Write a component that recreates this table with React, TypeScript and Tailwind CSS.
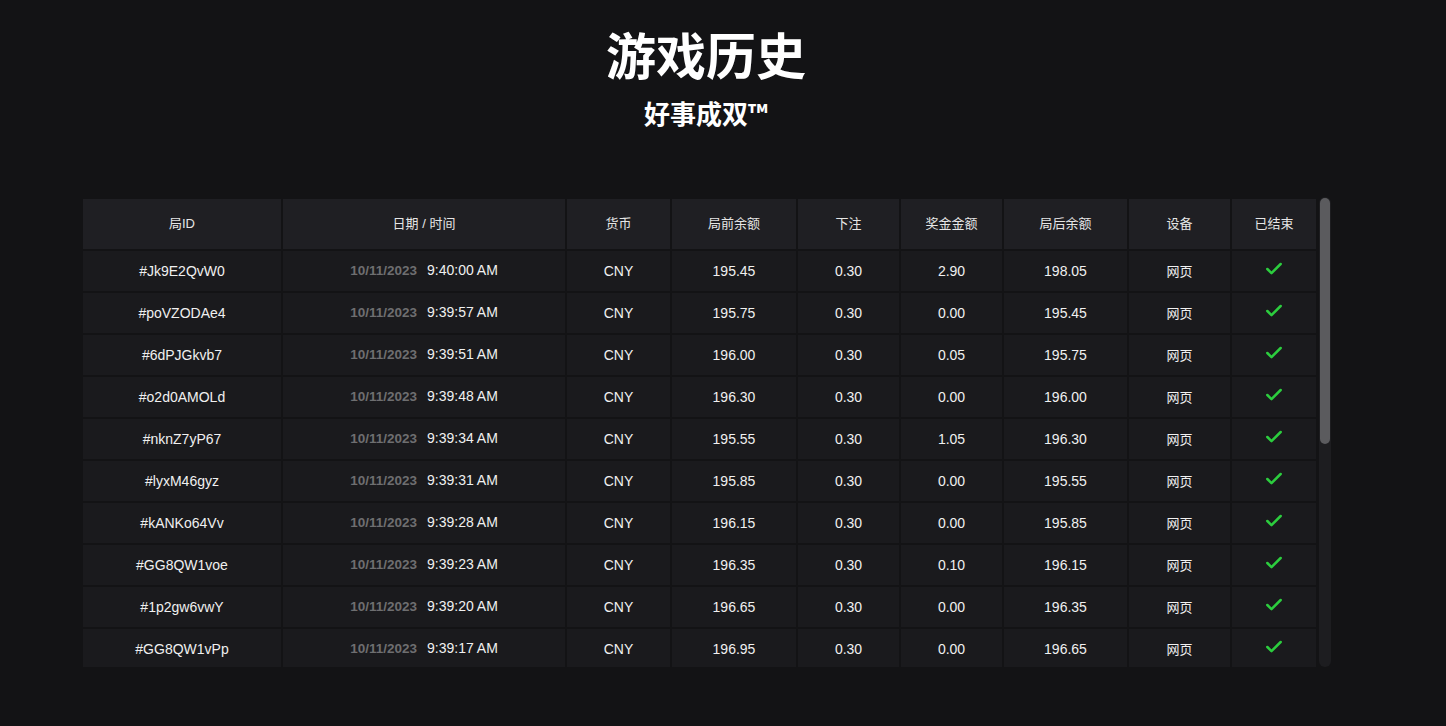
import { Check } from "lucide-react";

type Round = {
  id: string;
  time: string;
  before: string;
  win: string;
  after: string;
};

const rounds: Round[] = [
  { id: "#Jk9E2QvW0", time: "9:40:00 AM", before: "195.45", win: "2.90", after: "198.05" },
  { id: "#poVZODAe4", time: "9:39:57 AM", before: "195.75", win: "0.00", after: "195.45" },
  { id: "#6dPJGkvb7", time: "9:39:51 AM", before: "196.00", win: "0.05", after: "195.75" },
  { id: "#o2d0AMOLd", time: "9:39:48 AM", before: "196.30", win: "0.00", after: "196.00" },
  { id: "#nknZ7yP67", time: "9:39:34 AM", before: "195.55", win: "1.05", after: "196.30" },
  { id: "#lyxM46gyz", time: "9:39:31 AM", before: "195.85", win: "0.00", after: "195.55" },
  { id: "#kANKo64Vv", time: "9:39:28 AM", before: "196.15", win: "0.00", after: "195.85" },
  { id: "#GG8QW1voe", time: "9:39:23 AM", before: "196.35", win: "0.10", after: "196.15" },
  { id: "#1p2gw6vwY", time: "9:39:20 AM", before: "196.65", win: "0.00", after: "196.35" },
  { id: "#GG8QW1vPp", time: "9:39:17 AM", before: "196.95", win: "0.00", after: "196.65" },
];

const headers = ["局ID", "日期 / 时间", "货币", "局前余额", "下注", "奖金金额", "局后余额", "设备", "已结束"];
const widths = [198, 282, 103, 124, 101, 101, 123, 101, 84];

export default function App() {
  return (
    <div className="min-h-screen w-full bg-[#131315] font-['Liberation_Sans','Noto_Sans_CJK_SC',sans-serif] text-white">
      <div className="w-[1412px] flex flex-col items-center">
        <h1 className="mt-[18px] text-[50px] leading-[70px] font-bold font-['Noto_Sans_CJK_SC',sans-serif]">
          游戏历史
        </h1>
        <h2 className="mt-[8px] text-[26px] leading-[34px] font-bold font-['Noto_Sans_CJK_SC',sans-serif]">
          好事成双™
        </h2>

        <div className="mt-[67px] flex w-[1250px] h-[470px]">
          <div className="w-[1237px] h-full overflow-hidden">
            <table className="border-separate border-spacing-[2px] table-fixed">
              <colgroup>
                {widths.map((w, i) => (
                  <col key={i} style={{ width: w }} />
                ))}
              </colgroup>
              <thead>
                <tr>
                  {headers.map((h) => (
                    <th key={h} className="h-[50px] bg-[#1f1f23] text-[13px] font-normal text-[#e6e6e6] text-center">
                      {h}
                    </th>
                  ))}
                </tr>
              </thead>
              <tbody>
                {rounds.map((r) => (
                  <tr key={r.id} className="text-[14px] text-[#f0f0f0] text-center">
                    <td className="h-[40px] bg-[#1a1a1d]">{r.id}</td>
                    <td className="h-[40px] bg-[#1a1a1d]">
                      <span className="text-[13.5px] font-bold text-[#6e6e70] mr-[10px]">10/11/2023</span>
                      <span>{r.time}</span>
                    </td>
                    <td className="h-[40px] bg-[#1a1a1d]">CNY</td>
                    <td className="h-[40px] bg-[#1a1a1d]">{r.before}</td>
                    <td className="h-[40px] bg-[#1a1a1d]">0.30</td>
                    <td className="h-[40px] bg-[#1a1a1d]">{r.win}</td>
                    <td className="h-[40px] bg-[#1a1a1d]">{r.after}</td>
                    <td className="h-[40px] bg-[#1a1a1d] font-['Noto_Sans_CJK_SC',sans-serif] text-[13px]">网页</td>
                    <td className="h-[40px] bg-[#1a1a1d]">
                      <Check className="inline-block w-[20px] h-[20px] text-[#2ccd3e] -mt-[6px]" strokeWidth={3} />
                    </td>
                  </tr>
                ))}
              </tbody>
            </table>
          </div>
          {/* scrollbar */}
          <div className="ml-[1px] w-[12px] h-full rounded-full bg-[#1d1d20] p-[1px]">
            <div className="h-[246px] w-full rounded-full bg-[#5b5b5e]" />
          </div>
        </div>
      </div>
    </div>
  );
}
